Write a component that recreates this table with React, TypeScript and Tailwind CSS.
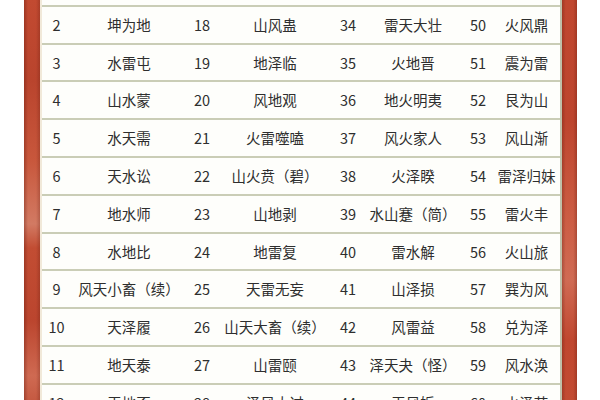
const ROWS: [number | "", string, number | "", string, number | "", string, number | "", string][] = [
  // row 1 sits above the visible area; only its bottom rule shows
  ["", "", "", "", "", "", "", ""],
  [2, "坤为地", 18, "山风蛊", 34, "雷天大壮", 50, "火风鼎"],
  [3, "水雷屯", 19, "地泽临", 35, "火地晋", 51, "震为雷"],
  [4, "山水蒙", 20, "风地观", 36, "地火明夷", 52, "艮为山"],
  [5, "水天需", 21, "火雷噬嗑", 37, "风火家人", 53, "风山渐"],
  [6, "天水讼", 22, "山火贲（碧）", 38, "火泽睽", 54, "雷泽归妹"],
  [7, "地水师", 23, "山地剥", 39, "水山蹇（简）", 55, "雷火丰"],
  [8, "水地比", 24, "地雷复", 40, "雷水解", 56, "火山旅"],
  [9, "风天小畜（续）", 25, "天雷无妄", 41, "山泽损", 57, "巽为风"],
  [10, "天泽履", 26, "山天大畜（续）", 42, "风雷益", 58, "兑为泽"],
  [11, "地天泰", 27, "山雷颐", 43, "泽天夬（怪）", 59, "风水涣"],
  [12, "天地否", 28, "泽风大过", 44, "天风姤", 60, "水泽节"],
];

const redBar =
  "bg-[linear-gradient(to_right,rgba(90,20,10,0.35),transparent_25%,transparent_75%,rgba(90,20,10,0.25)),linear-gradient(to_bottom,#c24a31,#b9442d_20%,#c8573c_40%,#d27a63_56%,#c24d33_62%,#bb452e_80%,#cf6a52_94%,#c55a42)]";
const redBarRight =
  "bg-[linear-gradient(to_right,rgba(90,20,10,0.3),transparent_25%,transparent_75%,rgba(90,20,10,0.3)),linear-gradient(to_bottom,#c0472f,#bd452e_30%,#cc5d44_55%,#d06b54_70%,#c0472f_85%,#c24b32)]";

export default function App() {
  return (
    <div
      className="w-[600px] h-[400px] overflow-hidden bg-white flex"
      style={{ fontFamily: '"Noto Sans CJK SC", "Noto Sans", sans-serif' }}
    >
      <div className="w-[24px] shrink-0 bg-white" />
      <div className={"w-[16px] shrink-0 " + redBar} />

      {/* table */}
      <div className="w-[522px] shrink-0 bg-[#fefefb] border-l-2 border-[#f1e9d9] border-r-2 border-r-[#bfc1aa]">
        <div className="-mt-[31px]">
          {ROWS.map((r, i) => (
            <div
              key={i}
              className="h-[37.8px] grid grid-cols-[29px_116px_30px_116px_30px_100px_30px_67px] items-center border-b-2 border-[#cacdb6] text-[14.5px] text-[#2e2e2e] text-center whitespace-nowrap"
            >
              <span>{r[0]}</span>
              <span>{r[1]}</span>
              <span>{r[2]}</span>
              <span>{r[3]}</span>
              <span>{r[4]}</span>
              <span>{r[5]}</span>
              <span>{r[6]}</span>
              <span>{r[7]}</span>
            </div>
          ))}
        </div>
      </div>

      <div className={"w-[15px] shrink-0 " + redBarRight} />
      <div className="flex-1 bg-white" />
    </div>
  );
}
